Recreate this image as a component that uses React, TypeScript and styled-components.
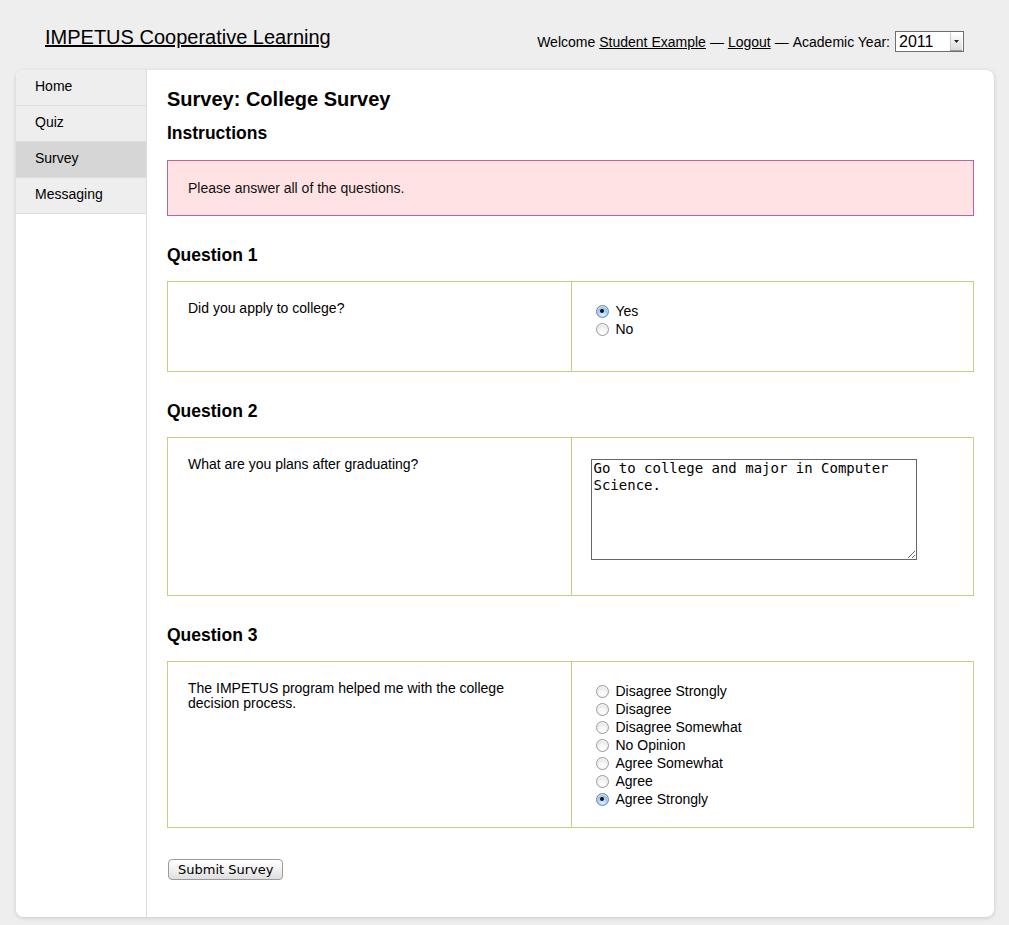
import React from "react";
import styled, { createGlobalStyle } from "styled-components";

const Global = createGlobalStyle`
  html, body { margin: 0; padding: 0; background: #eeeeee; }
  body { font-family: "Liberation Sans", Arial, Helvetica, sans-serif; color: #000; }
`;

const Header = styled.header`
  display: flex;
  justify-content: space-between;
  align-items: flex-start;
  box-sizing: border-box;
  height: 70px;
  padding: 25px 45px 0 45px;
`;

const SiteTitle = styled.a`
  font-size: 20px;
  line-height: 24px;
  color: #000;
  text-decoration: underline;
`;

const UserBar = styled.div`
  display: flex;
  align-items: center;
  gap: 4px;
  margin-top: 6px;
  font-size: 14px;
  color: #000;
`;

const UserLink = styled.a`
  color: #000;
  text-decoration: underline;
`;

const FakeSelect = styled.div`
  display: flex;
  align-items: stretch;
  box-sizing: border-box;
  width: 69px;
  height: 21px;
  margin-left: 1px;
  border: 1px solid #6e6e6e;
  background: #fff;
`;

const SelectValue = styled.span`
  flex: 1;
  padding-left: 3px;
  font-size: 16px;
  line-height: 19px;
`;

const SelectArrow = styled.span`
  display: flex;
  align-items: center;
  justify-content: center;
  width: 11px;
  margin: 1px;
  border-left: 1px solid #c8c8c8;
  background: linear-gradient(#ffffff, #dcdcdc);
  box-shadow: 0 1px 0 #999;
`;

const Card = styled.div`
  display: flex;
  margin: 0 15px 8px 16px;
  background: #fff;
  border-radius: 8px;
  overflow: hidden;
  box-shadow: 0 1px 4px rgba(0, 0, 0, 0.16);
`;

const Sidebar = styled.nav`
  width: 130px;
  flex-shrink: 0;
  border-right: 1px solid #dddddd;
  background: #fff;
`;

const NavItem = styled.a<{ $active?: boolean }>`
  display: block;
  padding: 8px 0 10px 19px;
  line-height: 17px;
  font-size: 14px;
  color: #000;
  text-decoration: none;
  background: ${(p) => (p.$active ? "#d6d6d6" : "#eeeeee")};
  border-bottom: 1px solid #dddddd;
`;

const Content = styled.main`
  flex: 1;
  padding: 18px 20px 37px 20px;
`;

const PageTitle = styled.h1`
  margin: 0;
  font-size: 20px;
  line-height: 22px;
  font-weight: bold;
`;

const SectionTitle = styled.h2<{ $top: number }>`
  margin: ${(p) => p.$top}px 0 0 0;
  font-size: 17.5px;
  line-height: 20px;
  font-weight: bold;
`;

const Notice = styled.div`
  margin-top: 17px;
  padding: 19px 20px;
  border: 1px solid #b9649a;
  background: #ffe2e4;
  font-size: 14px;
  line-height: 16px;
  color: #111;
`;

const QuestionBox = styled.div<{ $min?: number }>`
  display: grid;
  grid-template-columns: 1fr 1fr;
  margin-top: 16px;
  border: 1px solid #bfd183;
  min-height: ${(p) => (p.$min ? `${p.$min - 2}px` : "auto")};
`;

const Prompt = styled.div`
  padding: 19px 24px 19px 20px;
  font-size: 14px;
  line-height: 15px;
`;

const Answer = styled.div`
  padding: 20px 20px 19px 19px;
  border-left: 1px solid #bfd183;
`;

const Choice = styled.label`
  display: flex;
  align-items: center;
  height: 18px;
  padding-left: 5px;
  font-size: 14px;
  line-height: 18px;
`;

const Radio = styled.input`
  appearance: none;
  -webkit-appearance: none;
  box-sizing: border-box;
  width: 13px;
  height: 13px;
  margin: 0 7px 0 0;
  border-radius: 50%;
  border: 1px solid #9a9a9a;
  background: radial-gradient(circle at 50% 75%, #ffffff 0%, #f4f4f4 40%, #d6d6d6 100%);
  box-shadow: inset 0 1px 1px rgba(255, 255, 255, 0.9);
  position: relative;
  &:checked {
    border-color: #5c84b6;
    background: radial-gradient(circle at 50% 80%, #e4f1fd 0%, #a9cdf1 45%, #6ea3dc 100%);
  }
  &:checked::after {
    content: "";
    position: absolute;
    left: 3.5px;
    top: 3.5px;
    width: 4px;
    height: 4px;
    border-radius: 50%;
    background: #111;
  }
`;

const Answerbox = styled.textarea`
  display: block;
  box-sizing: border-box;
  width: 326px;
  height: 101px;
  margin: 1px 0 16px 0;
  padding: 0 2px;
  border: 1px solid #666;
  font-family: "DejaVu Sans Mono", monospace;
  font-size: 14px;
  line-height: 17px;
  color: #000;
  outline: none;
`;

const SubmitButton = styled.button`
  margin-top: 31px;
  margin-left: 1px;
  height: 21px;
  padding: 0 9px;
  border: 1px solid #9a9a9a;
  border-radius: 4px;
  background: linear-gradient(#ffffff, #f1f1f1 50%, #dedede);
  font-family: "DejaVu Sans", sans-serif;
  font-size: 13px;
  line-height: 19px;
  color: #000;
`;

const nav = ["Home", "Quiz", "Survey", "Messaging"];

const q3 = [
  "Disagree Strongly",
  "Disagree",
  "Disagree Somewhat",
  "No Opinion",
  "Agree Somewhat",
  "Agree",
  "Agree Strongly",
];

export default function App() {
  return (
    <>
      <Global />
      <Header>
        <SiteTitle href="#">IMPETUS Cooperative Learning</SiteTitle>
        <UserBar>
          <span>Welcome</span>
          <UserLink href="#">Student Example</UserLink>
          <span>—</span>
          <UserLink href="#">Logout</UserLink>
          <span>—</span>
          <span>Academic Year:</span>
          <FakeSelect>
            <SelectValue>2011</SelectValue>
            <SelectArrow>
              <svg width="5" height="3" viewBox="0 0 5 3">
                <path d="M0 0 H5 L2.5 3 Z" fill="#222" />
              </svg>
            </SelectArrow>
          </FakeSelect>
        </UserBar>
      </Header>
      <Card>
        <Sidebar>
          {nav.map((n) => (
            <NavItem key={n} href="#" $active={n === "Survey"}>
              {n}
            </NavItem>
          ))}
        </Sidebar>
        <Content>
          <PageTitle>Survey: College Survey</PageTitle>
          <SectionTitle $top={13}>Instructions</SectionTitle>
          <Notice>Please answer all of the questions.</Notice>

          <SectionTitle $top={29}>Question 1</SectionTitle>
          <QuestionBox $min={91}>
            <Prompt>Did you apply to college?</Prompt>
            <Answer>
              <Choice>
                <Radio type="radio" name="q1" defaultChecked />
                Yes
              </Choice>
              <Choice>
                <Radio type="radio" name="q1" />
                No
              </Choice>
            </Answer>
          </QuestionBox>

          <SectionTitle $top={29}>Question 2</SectionTitle>
          <QuestionBox>
            <Prompt>What are you plans after graduating?</Prompt>
            <Answer>
              <Answerbox defaultValue="Go to college and major in Computer Science." />
            </Answer>
          </QuestionBox>

          <SectionTitle $top={29}>Question 3</SectionTitle>
          <QuestionBox>
            <Prompt>The IMPETUS program helped me with the college decision process.</Prompt>
            <Answer>
              {q3.map((o) => (
                <Choice key={o}>
                  <Radio type="radio" name="q3" defaultChecked={o === "Agree Strongly"} />
                  {o}
                </Choice>
              ))}
            </Answer>
          </QuestionBox>

          <SubmitButton type="button">Submit Survey</SubmitButton>
        </Content>
      </Card>
    </>
  );
}
